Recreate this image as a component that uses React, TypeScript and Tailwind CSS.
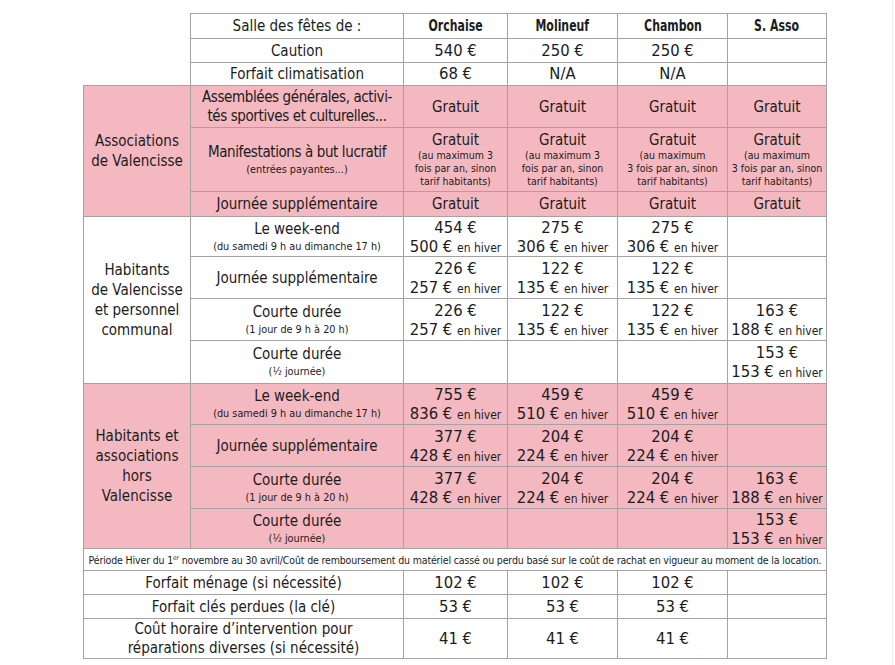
// Tarifs de location des salles des fêtes

type Price = { main: string; winter: string } | null;

const B = "border border-[#a3a3a3]";
const PINK = "bg-[#f4b8c0]";

const PriceCell = ({ p, pink }: { p: Price; pink?: boolean }) => (
  <td className={`${B} ${pink ? PINK : ""} text-center align-middle p-0`}>
    {p && (
      <>
        <div className="text-[16.5px] leading-[19px]">{p.main} €</div>
        <div className="text-[16.5px] leading-[19px] whitespace-nowrap">
          {p.winter} € <span className="text-[12px] leading-none">en hiver</span>
        </div>
      </>
    )}
  </td>
);

const LabelCell = ({
  title,
  sub,
  pink,
}: {
  title: string;
  sub?: string;
  pink?: boolean;
}) => (
  <td className={`${B} ${pink ? PINK : ""} text-center align-middle p-0`}>
    <div className="text-[15px] leading-[20px] whitespace-nowrap">{title}</div>
    {sub && <div className="text-[10.8px] leading-[16px] whitespace-nowrap">{sub}</div>}
  </td>
);

const Plain = ({ children, pink }: { children?: React.ReactNode; pink?: boolean }) => (
  <td className={`${B} ${pink ? PINK : ""} text-center align-middle p-0 text-[15px] leading-[20px] whitespace-nowrap`}>
    {children}
  </td>
);

const Amount = ({ children }: { children?: React.ReactNode }) => (
  <td className={`${B} text-center align-middle p-0 text-[16.5px] leading-[20px] whitespace-nowrap`}>
    {children}
  </td>
);

const Head = ({ children }: { children: React.ReactNode }) => (
  <td className={`${B} text-center align-middle p-0 whitespace-nowrap`}>
    <span className="inline-block scale-x-[0.76] text-[16px] leading-[20px] font-bold">{children}</span>
  </td>
);

const GratuitNote = ({ lines }: { lines: string[] }) => (
  <td className={`${B} ${PINK} text-center align-middle p-0`}>
    <div className="text-[15px] leading-[18px]">Gratuit</div>
    <div className="text-[10.5px] leading-[13px] whitespace-nowrap">
      {lines.map((l, i) => (
        <div key={i}>{l}</div>
      ))}
    </div>
  </td>
);

const p = (main: string, winter: string): Price => ({ main, winter });

const residents: { title: string; sub: string; prices: Price[] }[] = [
  {
    title: "Le week-end",
    sub: "(du samedi 9 h au dimanche 17 h)",
    prices: [p("454", "500"), p("275", "306"), p("275", "306"), null],
  },
  {
    title: "Journée supplémentaire",
    sub: "",
    prices: [p("226", "257"), p("122", "135"), p("122", "135"), null],
  },
  {
    title: "Courte durée",
    sub: "(1 jour de 9 h à 20 h)",
    prices: [p("226", "257"), p("122", "135"), p("122", "135"), p("163", "188")],
  },
  {
    title: "Courte durée",
    sub: "(½ journée)",
    prices: [null, null, null, p("153", "153")],
  },
];

const outsiders: { title: string; sub: string; prices: Price[] }[] = [
  {
    title: "Le week-end",
    sub: "(du samedi 9 h au dimanche 17 h)",
    prices: [p("755", "836"), p("459", "510"), p("459", "510"), null],
  },
  {
    title: "Journée supplémentaire",
    sub: "",
    prices: [p("377", "428"), p("204", "224"), p("204", "224"), null],
  },
  {
    title: "Courte durée",
    sub: "(1 jour de 9 h à 20 h)",
    prices: [p("377", "428"), p("204", "224"), p("204", "224"), p("163", "188")],
  },
  {
    title: "Courte durée",
    sub: "(½ journée)",
    prices: [null, null, null, p("153", "153")],
  },
];

const residentHeights = ["h-[40px]", "h-[42px]", "h-[42px]", "h-[43px]"];
const outsiderHeights = ["h-[41px]", "h-[42px]", "h-[42px]", "h-[40px]"];

export default function App() {
  return (
    <div className="w-[895px] h-[665px] bg-white overflow-hidden text-[#1c1c1c] font-['DejaVu_Sans_Condensed','DejaVu_Sans',sans-serif]">
      <div className="w-[893px] h-full border-r border-[#efefef] pt-[13px] pl-[83px]">
        <table className="table-fixed border-collapse w-[743px]">
          <colgroup>
            <col className="w-[107px]" />
            <col className="w-[213px]" />
            <col className="w-[104px]" />
            <col className="w-[110px]" />
            <col className="w-[110px]" />
            <col className="w-[99px]" />
          </colgroup>
          <tbody>
            {/* Header */}
            <tr className="h-[24px]">
              <td className="p-0 border-0" />
              <Plain>Salle des fêtes de :</Plain>
              <Head>Orchaise</Head>
              <Head>Molineuf</Head>
              <Head>Chambon</Head>
              <Head>S. Asso</Head>
            </tr>
            <tr className="h-[24px]">
              <td className="p-0 border-0" />
              <Plain>Caution</Plain>
              <Amount>540 €</Amount>
              <Amount>250 €</Amount>
              <Amount>250 €</Amount>
              <Amount />
            </tr>
            <tr className="h-[23px]">
              <td className="p-0 border-0" />
              <Plain>Forfait climatisation</Plain>
              <Amount>68 €</Amount>
              <Amount>N/A</Amount>
              <Amount>N/A</Amount>
              <Amount />
            </tr>

            {/* Associations */}
            <tr className="h-[42px]">
              <td rowSpan={3} className={`${B} ${PINK} text-center align-middle p-0 text-[15px] leading-[20px]`}>
                Associations
                <br />
                de Valencisse
              </td>
              <td className={`${B} ${PINK} text-center align-middle p-0 text-[15px] leading-[19px] tracking-[-0.4px] whitespace-nowrap`}>
                Assemblées générales, activi-
                <br />
                tés sportives et culturelles...
              </td>
              <Plain pink>Gratuit</Plain>
              <Plain pink>Gratuit</Plain>
              <Plain pink>Gratuit</Plain>
              <Plain pink>Gratuit</Plain>
            </tr>
            <tr className="h-[64px]">
              <td className={`${B} ${PINK} text-center align-middle p-0`}>
                <div className="text-[15px] leading-[20px] tracking-[-0.4px] whitespace-nowrap">
                  Manifestations à but lucratif
                </div>
                <div className="text-[10.8px] leading-[16px]">(entrées payantes...)</div>
              </td>
              <GratuitNote lines={["(au maximum 3", "fois par an, sinon", "tarif habitants)"]} />
              <GratuitNote lines={["(au maximum 3", "fois par an, sinon", "tarif habitants)"]} />
              <GratuitNote lines={["(au maximum", "3 fois par an, sinon", "tarif habitants)"]} />
              <GratuitNote lines={["(au maximum", "3 fois par an, sinon", "tarif habitants)"]} />
            </tr>
            <tr className="h-[25px]">
              <Plain pink>Journée supplémentaire</Plain>
              <Plain pink>Gratuit</Plain>
              <Plain pink>Gratuit</Plain>
              <Plain pink>Gratuit</Plain>
              <Plain pink>Gratuit</Plain>
            </tr>

            {/* Habitants */}
            {residents.map((r, i) => (
              <tr key={`r${i}`} className={residentHeights[i]}>
                {i === 0 && (
                  <td rowSpan={4} className={`${B} text-center align-middle p-0 text-[15px] leading-[20px]`}>
                    Habitants
                    <br />
                    de Valencisse
                    <br />
                    et personnel
                    <br />
                    communal
                  </td>
                )}
                <LabelCell title={r.title} sub={r.sub} />
                {r.prices.map((pr, j) => (
                  <PriceCell key={j} p={pr} />
                ))}
              </tr>
            ))}

            {/* Hors Valencisse */}
            {outsiders.map((r, i) => (
              <tr key={`o${i}`} className={outsiderHeights[i]}>
                {i === 0 && (
                  <td rowSpan={4} className={`${B} ${PINK} text-center align-middle p-0 text-[15px] leading-[20px]`}>
                    Habitants et
                    <br />
                    associations
                    <br />
                    hors
                    <br />
                    Valencisse
                  </td>
                )}
                <LabelCell title={r.title} sub={r.sub} pink />
                {r.prices.map((pr, j) => (
                  <PriceCell key={j} p={pr} pink />
                ))}
              </tr>
            ))}

            {/* Footnote */}
            <tr className="h-[22px]">
              <td colSpan={6} className={`${B} text-center align-middle p-0 text-[10.5px] leading-[14px] whitespace-nowrap tracking-[-0.15px]`}>
                Période Hiver du 1<sup className="text-[6.5px]">er</sup> novembre au 30 avril/Coût de remboursement du
                matériel cassé ou perdu basé sur le coût de rachat en vigueur au moment de la location.
              </td>
            </tr>

            {/* Forfaits */}
            <tr className="h-[24px]">
              <td colSpan={2} className={`${B} text-center align-middle p-0 text-[15px] leading-[20px]`}>
                Forfait ménage (si nécessité)
              </td>
              <Amount>102 €</Amount>
              <Amount>102 €</Amount>
              <Amount>102 €</Amount>
              <Amount />
            </tr>
            <tr className="h-[24px]">
              <td colSpan={2} className={`${B} text-center align-middle p-0 text-[15px] leading-[20px]`}>
                Forfait clés perdues (la clé)
              </td>
              <Amount>53 €</Amount>
              <Amount>53 €</Amount>
              <Amount>53 €</Amount>
              <Amount />
            </tr>
            <tr className="h-[40px]">
              <td colSpan={2} className={`${B} text-center align-middle p-0 text-[15px] leading-[19px]`}>
                Coût horaire d’intervention pour
                <br />
                réparations diverses (si nécessité)
              </td>
              <Amount>41 €</Amount>
              <Amount>41 €</Amount>
              <Amount>41 €</Amount>
              <Amount />
            </tr>
          </tbody>
        </table>
      </div>
    </div>
  );
}
